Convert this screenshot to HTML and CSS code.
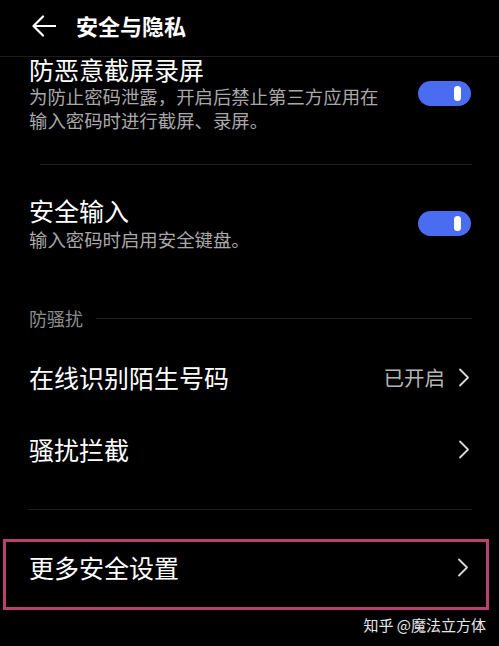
FILE: index.html
```html
<!doctype html>
<html lang="zh-CN">
<head>
	<meta charset="UTF-8">
	<title>安全与隐私</title>
	<link rel="stylesheet" href="styles.css">
</head>
<body>
	<div class="page">
		<div class="header">
			<svg class="back" width="24" height="22" viewBox="0 0 24 22">
				<path d="M11 1.5 1.5 11 11 20.5M1.5 11H23.5" fill="none" stroke="#fff" stroke-width="2.2" stroke-linecap="round" stroke-linejoin="round"/>
			</svg>
			<h1 class="title">安全与隐私</h1>
		</div>

		<div class="switch-item first">
			<div class="text">
				<div class="name">防恶意截屏录屏</div>
				<div class="desc">为防止密码泄露，开启后禁止第三方应用在<br>输入密码时进行截屏、录屏。</div>
			</div>
			<span class="switch"><i></i></span>
		</div>
		<div class="divider inset"></div>

		<div class="switch-item second">
			<div class="text">
				<div class="name">安全输入</div>
				<div class="desc">输入密码时启用安全键盘。</div>
			</div>
			<span class="switch"><i></i></span>
		</div>

		<div class="group-title">
			<span>防骚扰</span>
			<span class="line"></span>
		</div>

		<div class="link-item">
			<span class="name">在线识别陌生号码</span>
			<span class="value">已开启</span>
			<svg class="arrow" width="12" height="19" viewBox="0 0 12 19"><path d="M2 1.5 10 9.5 2 17.5" fill="none" stroke="#d8d8d8" stroke-width="1.8" stroke-linecap="round" stroke-linejoin="round"/></svg>
		</div>
		<div class="link-item">
			<span class="name">骚扰拦截</span>
			<svg class="arrow" width="12" height="19" viewBox="0 0 12 19"><path d="M2 1.5 10 9.5 2 17.5" fill="none" stroke="#d8d8d8" stroke-width="1.8" stroke-linecap="round" stroke-linejoin="round"/></svg>
		</div>
		<div class="divider full"></div>

		<div class="more">
			<span class="name">更多安全设置</span>
			<svg class="arrow" width="12" height="19" viewBox="0 0 12 19"><path d="M2 1.5 10 9.5 2 17.5" fill="none" stroke="#d8d8d8" stroke-width="1.8" stroke-linecap="round" stroke-linejoin="round"/></svg>
		</div>

		<div class="mark">知乎 @魔法立方体</div>
	</div>
</body>
</html>
```

FILE: styles.css
```css
*{
	margin:0;
	padding:0;
	box-sizing:border-box;
}
body{
	background:#000;
	color:#fff;
	font-family:"Noto Sans CJK SC","Noto Sans",sans-serif;
}
.page{
	width:499px;
	height:646px;
	overflow:hidden;
}
.header{
	height:57px;
	display:flex;
	align-items:center;
	padding:0 0 6px 32px;
	border-bottom:1px solid #1c1c1c;
}
.header .back{
	margin-top:2px;
}
.header .title{
	margin-left:20px;
	font-size:22px;
	font-weight:bold;
	line-height:28px;
}
.switch-item{
	display:flex;
	align-items:center;
	padding:0 28px 0 29px;
}
.switch-item .text{
	flex:1;
}
.switch-item .name{
	font-size:25px;
	line-height:24px;
}
.switch-item .desc{
	margin-top:3px;
	font-size:18.4px;
	line-height:24px;
	color:#a8a8a8;
}
.switch-item.second{
	padding-top:33px;
}
.switch-item.second .desc{
	margin-top:5px;
}
.switch{
	display:flex;
	align-items:center;
	justify-content:flex-end;
	width:53px;
	height:25px;
	padding-right:10px;
	border-radius:13px;
	background:#4a6cf0;
	margin-bottom:3px;
}
.switch i{
	display:block;
	width:7px;
	height:15px;
	border-radius:4px;
	background:#fff;
}
.divider{
	height:1px;
	background:#1f1f1f;
}
.divider.inset{
	margin:32px 27px 0 40px;
}
.divider.full{
	margin:24px 27px 0 28px;
}
.group-title{
	display:flex;
	align-items:center;
	margin-top:57px;
	padding:0 27px 0 29px;
	font-size:18px;
	line-height:20px;
	color:#8c8c8c;
}
.group-title .line{
	flex:1;
	height:1px;
	margin-left:13px;
	background:#1f1f1f;
}
.link-item{
	display:flex;
	align-items:center;
	height:72px;
	padding:0 29px 0 29px;
}
.group-title + .link-item{
	margin-top:13px;
}
.link-item .name,
.more .name{
	flex:1;
	font-size:25px;
	line-height:28px;
}
.link-item .value{
	font-size:20.5px;
	color:#b4b4b4;
	margin-right:13px;
}
.more{
	display:flex;
	align-items:center;
	height:71px;
	width:486px;
	margin:29px 0 0 3px;
	padding:0 17px 15px 23px;
	border:3px solid #b8416f;
}
.mark{
	margin-top:7px;
	padding-right:13px;
	text-align:right;
	font-size:15px;
	line-height:16px;
	color:#e6e6e6;
}
```
